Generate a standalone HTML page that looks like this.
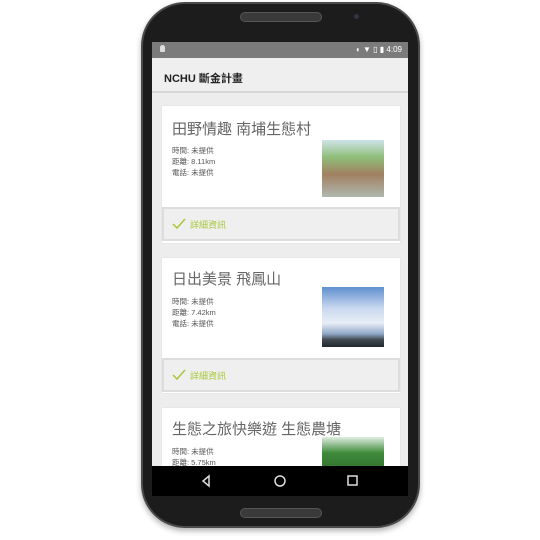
<!DOCTYPE html>
<html><head><meta charset="utf-8"><style>
*{margin:0;padding:0;box-sizing:border-box}
body{width:540px;height:540px;background:#fff;position:relative;overflow:hidden;font-family:"Liberation Sans","Noto Sans CJK TC",sans-serif}
.phone{position:absolute;left:141px;top:2px;width:279px;height:526px;background:#1c1c1c;border-radius:44px;border:2px solid #4a4a4a;box-shadow:0 3px 6px rgba(0,0,0,.3)}
.spk{position:absolute;background:#3a3a3a;border-radius:6px;border:1px solid #555}
.screen{position:absolute;left:152px;top:42px;width:256px;height:424px;background:#ededed;overflow:hidden}
.sb{height:16px;background:#7b7b7b;color:#fff;font-size:8px;position:relative}
.ab{height:35px;background:#efefef;border-bottom:2px solid #d6d6d6;font-size:11px;font-weight:bold;color:#222;padding:12px 0 0 12px}
.card{position:absolute;left:10px;width:238px;background:#fff;box-shadow:0 0 1px #ccc}
.t{position:absolute;left:10px;font-size:15px;color:#666}
.info{position:absolute;left:10px;font-size:7.5px;color:#555;line-height:11px}
.img{position:absolute;left:160px;width:62px}
.btn{position:absolute;left:0;width:238px;height:34px;background:#efefef;border:2px solid #ddd;color:#a8c83a;font-size:9px;padding:9px 0 0 26px}
.btn svg{position:absolute;left:8px;top:9px}
.nav{position:absolute;left:152px;top:466px;width:256px;height:30px;background:#000}
</style></head><body>
<div class="phone"></div>
<div class="spk" style="left:240px;top:12px;width:82px;height:10px"></div>
<div class="spk" style="left:240px;top:508px;width:82px;height:10px"></div>
<div style="position:absolute;left:354px;top:14px;width:5px;height:5px;border-radius:50%;background:#334"></div>
<div class="screen">
 <div class="sb"><span style="position:absolute;left:8px;top:3px;width:5px;height:7px;background:#ddd;border-radius:3px 3px 1px 1px"></span><span style="position:absolute;right:6px;top:3px">◐ ▼ ▯ ▮ 4:09</span></div>
 <div class="ab">NCHU 斷金計畫</div>
 <div class="card" style="top:64px;height:137px">
  <div class="t" style="top:12px">田野情趣 南埔生態村</div>
  <div class="info" style="top:39px">時間: 未提供<br>距離: 8.11km<br>電話: 未提供</div>
  <div class="img" style="top:34px;height:57px;background:linear-gradient(180deg,#cfe3e8 0,#8fbf7a 30%,#a08060 60%,#b0b8b0 100%)"></div>
  <div class="btn" style="top:101px"><svg width="14" height="12"><path d="M1 6 L5 10 L13 1" stroke="#a8c83a" stroke-width="1.5" fill="none"/></svg>詳細資訊</div>
 </div>
 <div class="card" style="top:216px;height:135px">
  <div class="t" style="top:10px">日出美景 飛鳳山</div>
  <div class="info" style="top:38px">時間: 未提供<br>距離: 7.42km<br>電話: 未提供</div>
  <div class="img" style="top:29px;height:60px;background:linear-gradient(180deg,#5f8fd0 0,#c8d8ee 35%,#e8eef6 60%,#90a8c8 78%,#404850 88%,#202830 100%)"></div>
  <div class="btn" style="top:100px"><svg width="14" height="12"><path d="M1 6 L5 10 L13 1" stroke="#a8c83a" stroke-width="1.5" fill="none"/></svg>詳細資訊</div>
 </div>
 <div class="card" style="top:366px;height:80px">
  <div class="t" style="top:10px">生態之旅快樂遊 生態農塘</div>
  <div class="info" style="top:38px">時間: 未提供<br>距離: 5.75km</div>
  <div class="img" style="top:29px;height:40px;background:linear-gradient(180deg,#dfeee0 0,#3e8a3a 40%,#2f6a2a 100%)"></div>
 </div>
</div>
<div class="nav">
 <svg width="256" height="30"><path d="M57 10 L51 15 L57 20 Z" stroke="#ddd" stroke-width="1.5" fill="none"/><circle cx="128" cy="15" r="5" stroke="#ddd" stroke-width="1.5" fill="none"/><rect x="196" y="10" width="9" height="9" stroke="#ddd" stroke-width="1.5" fill="none"/></svg>
</div>
</body></html>
